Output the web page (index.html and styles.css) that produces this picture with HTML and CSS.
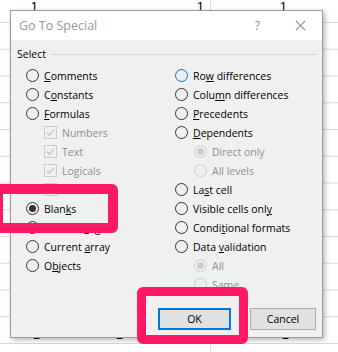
FILE: index.html
```html
<!DOCTYPE html>
<html lang="en">
<head>
  <meta charset="UTF-8">
  <title>Go To Special</title>
  <link rel="stylesheet" href="styles.css">
</head>
<body>
  <div class="sheet">
    <div class="cells top">
      <span class="cell">1</span><span class="cell"></span><span class="cell">1</span><span class="cell">1</span>
    </div>
    <div class="cells bottom">
      <span class="cell">1</span><span class="cell">1</span><span class="cell">1</span><span class="cell">1</span>
    </div>
  </div>

  <div class="dialog">
    <div class="titlebar">
      <span class="title">Go To Special</span>
      <span class="help">?</span>
      <svg class="close" viewBox="0 0 12 12" width="12" height="12"><path d="M1 1L11 11M11 1L1 11" stroke="#8a8a8a" stroke-width="1.1" fill="none"/></svg>
    </div>
    <div class="body">
      <div class="legend"><span>Select</span><i class="rule"></i></div>
      <div class="options">
        <div class="col">
          <label class="opt"><span class="radio"></span><span><u>C</u>omments</span></label>
          <label class="opt"><span class="radio"></span><span>C<u>o</u>nstants</span></label>
          <label class="opt"><span class="radio"></span><span><u>F</u>ormulas</span></label>
          <label class="opt sub off"><span class="check"><svg viewBox="0 0 12 12"><path d="M2 6.2L4.8 9L10 3" stroke="#bcbcbc" stroke-width="1.2" fill="none"/></svg></span><span>Numbers</span></label>
          <label class="opt sub off"><span class="check"><svg viewBox="0 0 12 12"><path d="M2 6.2L4.8 9L10 3" stroke="#bcbcbc" stroke-width="1.2" fill="none"/></svg></span><span>Text</span></label>
          <label class="opt sub off"><span class="check"><svg viewBox="0 0 12 12"><path d="M2 6.2L4.8 9L10 3" stroke="#bcbcbc" stroke-width="1.2" fill="none"/></svg></span><span>Logicals</span></label>
          <label class="opt sub off"><span class="check"></span><span>Errors</span></label>
          <label class="opt"><span class="radio on"></span><span>Blan<u>k</u>s</span></label>
          <label class="opt"><span class="radio"></span><span>Current <u>r</u>egion</span></label>
          <label class="opt"><span class="radio"></span><span>Current <u>a</u>rray</span></label>
          <label class="opt"><span class="radio"></span><span>O<u>b</u>jects</span></label>
        </div>
        <div class="col">
          <label class="opt"><span class="radio focus"></span><span>Ro<u>w</u> differences</span></label>
          <label class="opt"><span class="radio"></span><span>Colu<u>m</u>n differences</span></label>
          <label class="opt"><span class="radio"></span><span><u>P</u>recedents</span></label>
          <label class="opt"><span class="radio"></span><span><u>D</u>ependents</span></label>
          <label class="opt sub off"><span class="radio on"></span><span>Direct only</span></label>
          <label class="opt sub off"><span class="radio"></span><span>All levels</span></label>
          <label class="opt"><span class="radio"></span><span>La<u>s</u>t cell</span></label>
          <label class="opt"><span class="radio"></span><span>Visible cells onl<u>y</u></span></label>
          <label class="opt"><span class="radio"></span><span>Condi<u>t</u>ional formats</span></label>
          <label class="opt"><span class="radio"></span><span>Data <u>v</u>alidation</span></label>
          <label class="opt sub off"><span class="radio on"></span><span>All</span></label>
          <label class="opt sub off"><span class="radio"></span><span>Same</span></label>
        </div>
      </div>
      <div class="buttons">
        <button class="btn default">OK</button>
        <button class="btn cancel">Cancel</button>
      </div>
    </div>
  </div>

  <div class="mark mark-blanks"></div>
  <div class="mark mark-ok"></div>
</body>
</html>
```

FILE: styles.css
```css
body {
  margin: 0;
  width: 338px;
  height: 352px;
  overflow: hidden;
  position: relative;
  font-family: "Segoe UI", "Open Sans", sans-serif;
  background: #fff;
}
.sheet {
  height: 352px;
  display: flex;
  flex-direction: column;
  justify-content: space-between;
  background-color: #fff;
  background-image:
    linear-gradient(to right, #dadada 1px, transparent 1px),
    linear-gradient(to bottom, #dadada 1px, transparent 1px);
  background-size: 83px 26.75px;
  background-position: 44px 22px;
  font-family: "Liberation Sans", Arial, sans-serif;
  font-size: 13px;
}
.cells {
  display: flex;
  margin-left: -39px;
}
.cell {
  width: 83px;
  flex: none;
  text-align: right;
  box-sizing: border-box;
  padding-right: 6px;
}
.top { margin-top: -1px; }
.bottom { margin-bottom: 10px; margin-left: -37px; }

.dialog {
  position: absolute;
  left: 10px;
  top: 10px;
  width: 311px;
  height: 326px;
  border: 1px solid #9c9c9c;
  background: #f0f0f0;
  box-shadow: 2px 2px 5px rgba(0, 0, 0, 0.28);
  display: flex;
  flex-direction: column;
}
.titlebar {
  height: 29px;
  background: #fff;
  display: flex;
  align-items: center;
  padding-left: 8px;
  padding-right: 16px;
}
.title {
  flex: 1;
  font-size: 12.5px;
  color: #999;
}
.help {
  color: #8a8a8a;
  font-size: 12px;
  margin-right: 35px;
}
.close { width: 11px; height: 11px; }

.body {
  flex: 1;
  display: flex;
  flex-direction: column;
  padding: 6px 5px 6px 6px;
  font-size: 10.5px;
  color: #000;
}
.legend {
  display: flex;
  align-items: center;
  height: 16px;
}
.rule {
  flex: 1;
  height: 1px;
  background: #d5d5d5;
  margin-left: 6px;
}
.options {
  display: grid;
  grid-template-columns: 149px 1fr;
  margin-top: 4px;
  padding-left: 9px;
}
.col {
  display: flex;
  flex-direction: column;
}
.opt {
  display: flex;
  align-items: center;
  height: 19px;
  gap: 5px;
}
.opt u { text-decoration-thickness: 1px; text-underline-offset: 1px; }
.sub { padding-left: 19px; }
.col:first-child .sub { padding-left: 18px; }
.off { color: #8f8f8f; }

.radio {
  width: 11px;
  height: 11px;
  border: 1px solid #333;
  border-radius: 50%;
  flex: none;
  display: flex;
  align-items: center;
  justify-content: center;
}
.radio.on::after {
  content: "";
  width: 7px;
  height: 7px;
  border-radius: 50%;
  background: #333;
}
.radio.focus { border-color: #0078d7; }
.off .radio { border-color: #cccccc; }
.off .radio.on::after { background: #cccccc; }

.check {
  width: 11px;
  height: 11px;
  border: 1px solid #cccccc;
  flex: none;
  display: flex;
}
.check svg { width: 11px; height: 11px; }

.buttons {
  margin-top: auto;
  display: flex;
  justify-content: flex-end;
  gap: 19px;
  padding-right: 1px;
  padding-bottom: 1px;
}
.btn {
  height: 22px;
  font-family: inherit;
  font-size: 10.5px;
  color: #000;
  background: #e1e1e1;
  border: 1px solid #adadad;
  padding: 0;
}
.btn.default {
  width: 73px;
  border: 2px solid #0078d7;
}
.btn.cancel { width: 66px; }

.mark {
  position: absolute;
  border: 10px solid #fe1865;
  border-radius: 6px;
  box-sizing: border-box;
}
.mark-blanks {
  left: -7px;
  top: 184px;
  width: 125px;
  height: 49px;
}
.mark-ok {
  left: 137px;
  top: 287px;
  width: 111px;
  height: 57px;
  border-width: 9px;
}
```
